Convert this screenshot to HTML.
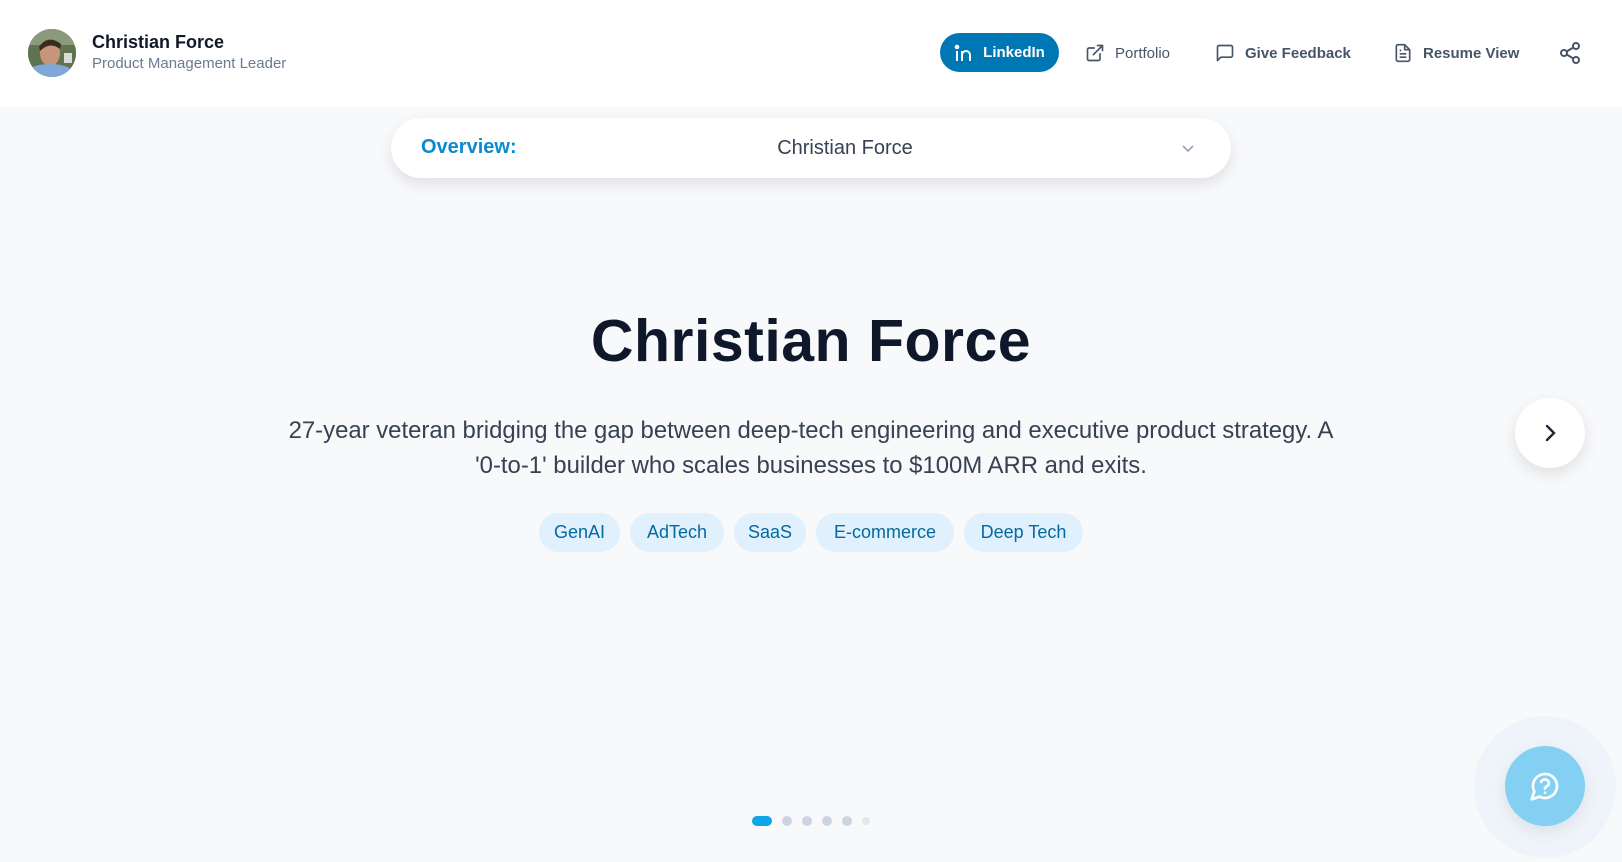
<!DOCTYPE html>
<html><head><meta charset="utf-8"><style>
*{box-sizing:border-box;margin:0;padding:0}
html,body{width:1622px;height:862px;overflow:hidden;background:#f8f9fb;font-family:"Liberation Sans",Arial,sans-serif}
.hdr{position:absolute;left:0;top:0;width:1622px;height:107px;background:#fff}
.av{position:absolute;left:28px;top:29px;width:48px;height:48px;border-radius:50%;overflow:hidden;background:#6b7d5a}
.name{position:absolute;left:92px;top:32px;font-size:18px;font-weight:bold;color:#111827}
.sub{position:absolute;left:92px;top:55px;font-size:15px;color:#6b7a90}
.nav{position:absolute;top:53px;transform:translateY(-50%);font-size:15px;color:#475569;display:flex;align-items:center;gap:10px;font-weight:bold}
.li{position:absolute;left:940px;top:33px;width:119px;height:39px;border-radius:20px;background:#0077b5;color:#fff;font-weight:bold;font-size:15px;display:flex;align-items:center;justify-content:center;gap:9px}
.bar{position:absolute;left:391px;top:118px;width:840px;height:60px;background:#fff;border-radius:30px;box-shadow:0 6px 14px rgba(0,0,0,.1)}
.h1{position:absolute;left:0;width:1622px;top:307px;text-align:center;font-size:59px;font-weight:bold;color:#0f172a;letter-spacing:.5px}
.p{position:absolute;left:200px;width:1222px;top:413px;text-align:center;font-size:23.9px;line-height:35px;color:#374151}
.tag{position:absolute;top:513px;height:39px;border-radius:20px;background:#e0f0fc;color:#0369a1;font-size:18px;display:flex;align-items:center;justify-content:center}
.dot{position:absolute;top:816px;width:10px;height:10px;border-radius:50%;background:#cbd5e1}
</style></head><body>
<div class="hdr">
<div class="av"><svg width="48" height="48"><rect width="48" height="48" fill="#5f7350"/><rect y="0" width="48" height="16" fill="#8a9a7a"/><ellipse cx="22" cy="24" rx="10" ry="13" fill="#c9957a"/><path d="M11 18 Q20 5 33 15 L32 20 Q22 12 12 22Z" fill="#3a2b22"/><path d="M0 48 L4 38 Q22 32 40 38 L48 48Z" fill="#7fa8d8"/><rect x="36" y="24" width="8" height="10" fill="#d8dcd8"/></svg></div>
<div class="name">Christian Force</div>
<div class="sub">Product Management Leader</div>
<div class="li"><svg width="20" height="18" viewBox="0 0 20 18" fill="none" stroke="#fff" stroke-width="2"><circle cx="3" cy="3" r="1.3"/><path d="M3 7v10M8 17V7M8 11a4 4 0 0 1 8 0v6"/></svg>LinkedIn</div>
<div class="nav" style="left:1085px;font-weight:normal"><svg width="20" height="20" viewBox="0 0 24 24" fill="none" stroke="#475569" stroke-width="2" stroke-linecap="round"><path d="M18 13v6a2 2 0 0 1-2 2H5a2 2 0 0 1-2-2V8a2 2 0 0 1 2-2h6M15 3h6v6M10 14L21 3"/></svg>Portfolio</div>
<div class="nav" style="left:1215px"><svg width="20" height="20" viewBox="0 0 24 24" fill="none" stroke="#475569" stroke-width="2" stroke-linejoin="round"><path d="M21 15a2 2 0 0 1-2 2H7l-4 4V5a2 2 0 0 1 2-2h14a2 2 0 0 1 2 2z"/></svg>Give Feedback</div>
<div class="nav" style="left:1393px"><svg width="20" height="20" viewBox="0 0 24 24" fill="none" stroke="#475569" stroke-width="2" stroke-linejoin="round"><path d="M14 2H6a2 2 0 0 0-2 2v16a2 2 0 0 0 2 2h12a2 2 0 0 0 2-2V8z"/><path d="M14 2v6h6M8 13h8M8 17h8M8 9h2"/></svg>Resume View</div>
<svg style="position:absolute;left:1558px;top:41px" width="24" height="24" viewBox="0 0 24 24" fill="none" stroke="#475569" stroke-width="2"><circle cx="18" cy="5" r="3"/><circle cx="6" cy="12" r="3"/><circle cx="18" cy="19" r="3"/><path d="M8.6 13.5l6.8 4M15.4 6.5l-6.8 4"/></svg>
</div>
<div class="bar">
<div style="position:absolute;left:30px;top:18px;font-size:20px;font-weight:bold;color:#0a8ad0">Overview:</div>
<div style="position:absolute;left:34px;width:840px;text-align:center;top:19px;font-size:20px;color:#374151">Christian Force</div>
<svg style="position:absolute;left:789px;top:22px" width="16" height="16" viewBox="0 0 16 16" fill="none" stroke="#94a3b8" stroke-width="1.6"><path d="M3 6l5 5 5-5"/></svg>
</div>
<div class="h1">Christian Force</div>
<div class="p">27-year veteran bridging the gap between deep-tech engineering and executive product strategy. A<br>'0-to-1' builder who scales businesses to $100M ARR and exits.</div>
<div class="tag" style="left:539px;width:81px">GenAI</div>
<div class="tag" style="left:630px;width:94px">AdTech</div>
<div class="tag" style="left:734px;width:72px">SaaS</div>
<div class="tag" style="left:816px;width:138px">E-commerce</div>
<div class="tag" style="left:964px;width:119px">Deep Tech</div>
<div style="position:absolute;left:1515px;top:398px;width:70px;height:70px;border-radius:50%;background:#fff;box-shadow:0 6px 16px rgba(0,0,0,.1)"><svg style="position:absolute;left:23px;top:23px" width="24" height="24" viewBox="0 0 24 24" fill="none" stroke="#1e293b" stroke-width="2.4" stroke-linecap="round"><path d="M9 5l7 7-7 7"/></svg></div>
<div style="position:absolute;left:1474px;top:716px;width:142px;height:142px;border-radius:50%;background:#eef4fa"></div>
<div style="position:absolute;left:1505px;top:746px;width:80px;height:80px;border-radius:50%;background:#84d0f2;box-shadow:0 6px 16px rgba(0,0,0,.08)"><svg style="position:absolute;left:24px;top:24px" width="32" height="32" viewBox="0 0 24 24" fill="none" stroke="#fff" stroke-width="2" stroke-linecap="round" stroke-linejoin="round"><path d="M7.9 20A9 9 0 1 0 4 16.1L2 22z"/><path d="M9.1 9a3 3 0 0 1 5.8 1c0 2-3 2.5-3 4"/><path d="M12 17h.01"/></svg></div>
<div style="position:absolute;left:752px;top:816px;width:20px;height:10px;border-radius:5px;background:#0ea5e9"></div>
<div class="dot" style="left:782px"></div><div class="dot" style="left:802px"></div><div class="dot" style="left:822px"></div><div class="dot" style="left:842px"></div><div class="dot" style="left:862px;width:8px;height:8px;top:817px;background:#e2e8f0"></div>
</body></html>
